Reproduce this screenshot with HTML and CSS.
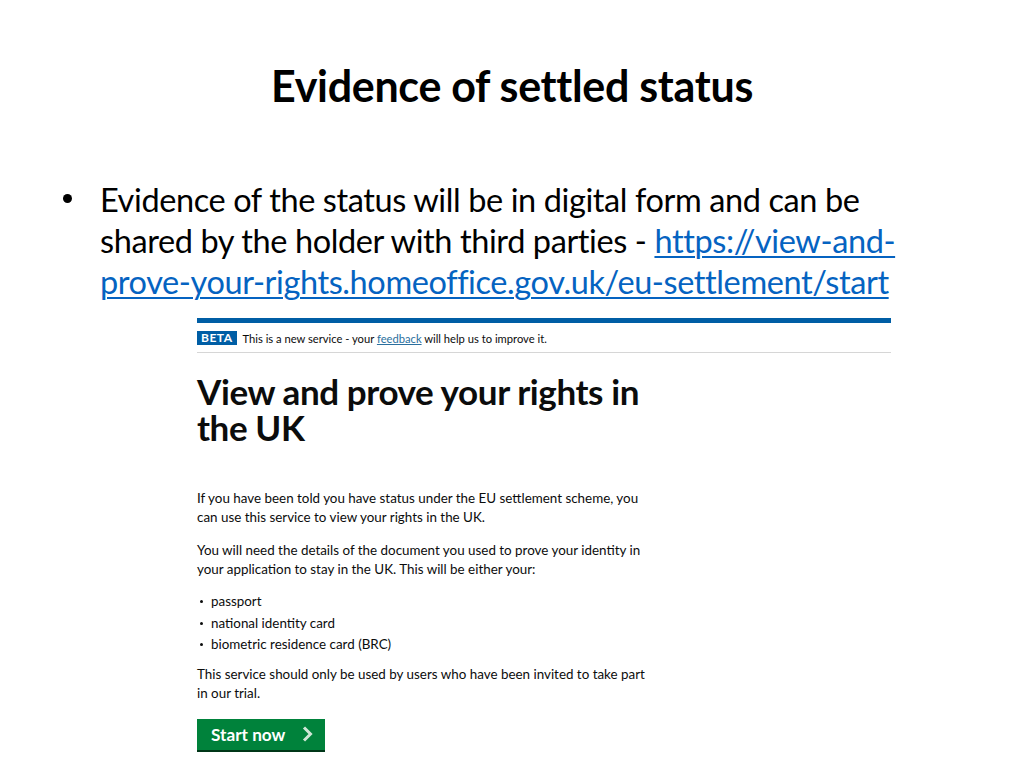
FILE: index.html
```html
<!DOCTYPE html>
<html>
<head>
<meta charset="utf-8">
<link rel="stylesheet" href="styles.css">
</head>
<body>
<div class="slide">
  <h1 class="title">Evidence of settled status</h1>
  <ul class="points">
    <li>Evidence of the status will be in digital form and can be shared by the holder with third parties - <a href="#">https://view-and-prove-your-rights.homeoffice.gov.uk/eu-settlement/start</a></li>
  </ul>
  <div class="gov">
    <div class="gov-bar"></div>
    <div class="phase">
      <span class="tag">BETA</span>
      <span class="phase-text">This is a new service - your <a href="#">feedback</a> will help us to improve it.</span>
    </div>
    <div class="gov-main">
      <h2 class="gov-title">View and prove your rights in the UK</h2>
      <p class="gov-p first">If you have been told you have status under the EU settlement scheme, you can use this service to view your rights in the UK.</p>
      <p class="gov-p">You will need the details of the document you used to prove your identity in your application to stay in the UK. This will be either your:</p>
      <ul class="gov-list">
        <li>passport</li>
        <li>national identity card</li>
        <li>biometric residence card (BRC)</li>
      </ul>
      <p class="gov-p after-list">This service should only be used by users who have been invited to take part in our trial.</p>
      <a class="start" href="#">Start now <svg class="chev" width="12" height="16" viewBox="0 0 12 16"><path d="M2 1.5 L8.5 8 L2 14.5" fill="none" stroke="#cfe6d6" stroke-width="3"/></svg></a>
    </div>
  </div>
</div>
</body>
</html>
```
FILE: styles.css
```css
html, body {
  margin: 0;
  padding: 0;
  background: #fff;
}
.slide {
  width: 1024px;
  height: 768px;
  overflow: hidden;
  font-family: Lato, "Open Sans", sans-serif;
  color: #000;
}
.title {
  margin: 0;
  padding-top: 62px;
  text-align: center;
  font-size: 43px;
  font-weight: 700;
  line-height: 48px;
  letter-spacing: -0.3px;
}
.points {
  list-style: none;
  margin: 0;
  padding: 0 0 0 100px;
  margin-top: 69px;
  width: 812px;
}
.points li {
  position: relative;
  font-size: 32.5px;
  line-height: 41px;
  letter-spacing: -0.4px;
}
.points li::before {
  content: "";
  position: absolute;
  left: -37px;
  top: 15px;
  width: 9px;
  height: 9px;
  border-radius: 50%;
  background: #000;
}
.points a {
  color: #0563c1;
  text-decoration: underline;
  text-decoration-thickness: 2px;
  text-underline-offset: 3px;
}
.gov {
  margin-left: 197px;
  margin-top: 16px;
  width: 694px;
  font-family: Lato, "Noto Sans", sans-serif;
  color: #0b0c0c;
}
.gov-bar {
  height: 5px;
  background: #005ea5;
}
.phase {
  display: flex;
  align-items: center;
  gap: 6px;
  padding: 8px 0 7px;
  border-bottom: 1px solid #d6d6d6;
  font-size: 11.2px;
}
.tag {
  background: #005ea5;
  color: #fff;
  font-weight: 700;
  font-size: 12px;
  line-height: 14px;
  padding: 0 4px;
  letter-spacing: 0.5px;
}
.phase a {
  color: #2b6f9e;
  text-decoration: underline;
}
.gov-main {
  width: 455px;
}
.gov-title {
  margin: 20px 0 0;
  font-size: 35px;
  line-height: 36px;
  font-weight: 700;
  letter-spacing: -0.4px;
}
.gov-p {
  margin: 0;
  margin-top: 14px;
  font-size: 13.4px;
  line-height: 19px;
}
.gov-p.first {
  margin-top: 44px;
}
.gov-p.after-list {
  margin-top: 9px;
}
.gov-list {
  list-style: none;
  margin: 12px 0 0;
  padding: 0 0 0 14px;
  font-size: 13.4px;
  line-height: 21.5px;
}
.gov-list li {
  position: relative;
}
.gov-list li::before {
  content: "";
  position: absolute;
  left: -11px;
  top: 9px;
  width: 3px;
  height: 3px;
  border-radius: 50%;
  background: #0b0c0c;
}
.start {
  display: inline-flex;
  align-items: center;
  gap: 17px;
  margin-top: 16px;
  height: 31px;
  padding: 0 11px 0 14px;
  background: #00823b;
  border-bottom: 2px solid #003618;
  color: #fff;
  font-weight: 700;
  font-size: 17.2px;
  text-decoration: none;
}
.chev {
  display: block;
}
```
